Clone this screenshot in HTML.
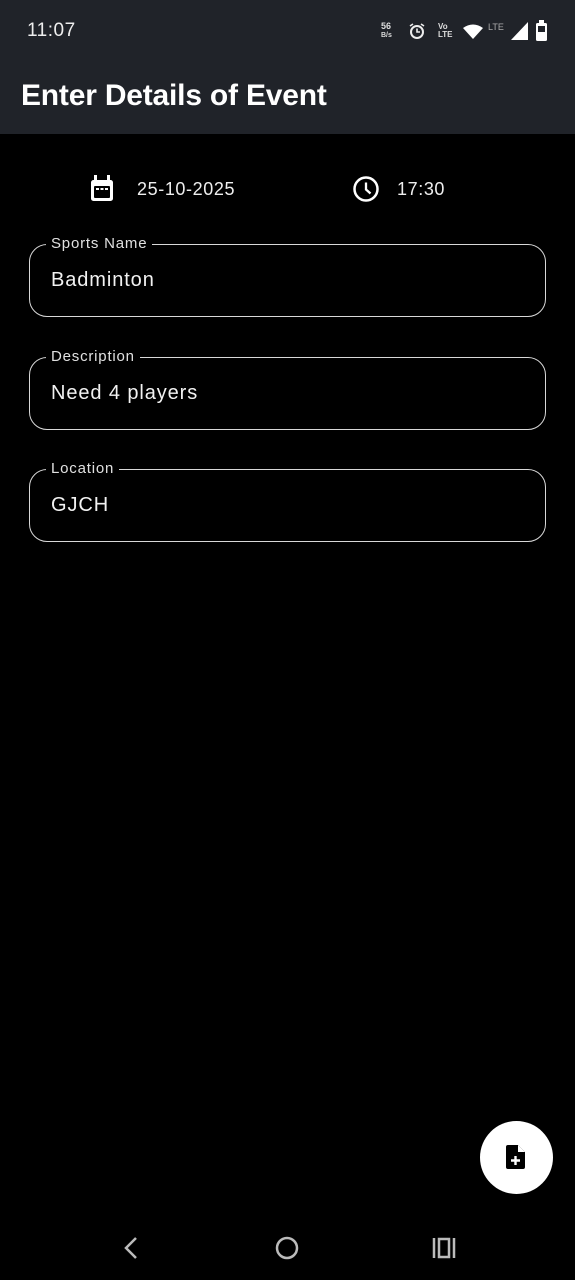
<!DOCTYPE html>
<html><head><style>
body{margin:0;width:575px;height:1280px;background:#000;font-family:"Liberation Sans",sans-serif;color:#fff;position:relative;overflow:hidden}
.hdr{position:absolute;left:0;top:0;width:575px;height:134px;background:#202329}
.abs{position:absolute}
.field{position:absolute;left:29px;width:517px;height:73px;border:1.3px solid #d8d8d8;border-radius:18px;box-sizing:border-box}
.lbl{position:absolute;left:16px;top:-10px;background:#000;padding:0 5px;font-size:15px;color:#e0e0e0;line-height:18px;letter-spacing:0.8px}
.val{position:absolute;left:21px;top:24px;font-size:20px;color:#f2f2f2;letter-spacing:0.9px}
</style></head><body>
<div class="hdr"></div>
<div class="abs" style="left:27px;top:20px;font-size:19px;color:#eee;letter-spacing:0.5px">11:07</div>
<div class="abs" style="left:381px;top:22px;font-size:9px;font-weight:bold;line-height:8px;color:#ddd">56<br><span style="font-size:7px">B/s</span></div>
<svg class="abs" style="left:408px;top:22px" width="18" height="18" viewBox="0 0 18 18"><circle cx="9" cy="10" r="6" fill="none" stroke="#eee" stroke-width="2"/><path d="M9 6.5V10h3M2 4l3-2M16 4l-3-2" stroke="#eee" stroke-width="1.6" fill="none"/></svg>
<div class="abs" style="left:438px;top:23px;font-size:8px;font-weight:bold;line-height:8px;color:#ddd">Vo<br>LTE</div>
<svg class="abs" style="left:463px;top:24px" width="20" height="16" viewBox="0 0 20 16"><path d="M0 4Q10-3 20 4L10 15Z" fill="#fff"/></svg>
<div class="abs" style="left:488px;top:22px;font-size:9px;color:#aaa">LTE</div>
<svg class="abs" style="left:511px;top:22px" width="17" height="18"><path d="M17 0V18H0Z" fill="#fff"/></svg>
<svg class="abs" style="left:535px;top:20px" width="13" height="22"><rect x="4" y="0" width="5" height="3" fill="#fff"/><rect x="1" y="3" width="11" height="18" rx="1.5" fill="#fff"/><rect x="3" y="6" width="7" height="6" fill="#202329"/></svg>
<div class="abs" style="left:21px;top:79px;font-size:30px;font-weight:bold;letter-spacing:-0.2px">Enter Details of Event</div>
<svg class="abs" style="left:89px;top:175px" width="26" height="28" viewBox="0 0 26 28"><rect x="2" y="5" width="22" height="21" rx="2.5" fill="#fff"/><rect x="5" y="0" width="3" height="6" fill="#fff"/><rect x="18" y="0" width="3" height="6" fill="#fff"/><rect x="5" y="11" width="16" height="12" rx="1" fill="#000"/><rect x="7" y="13" width="3" height="2" fill="#fff"/><rect x="11.5" y="13" width="3" height="2" fill="#fff"/><rect x="16" y="13" width="3" height="2" fill="#fff"/></svg>
<div class="abs" style="left:137px;top:179px;font-size:18px;color:#eee;letter-spacing:0.6px">25-10-2025</div>
<svg class="abs" style="left:352px;top:175px" width="28" height="28" viewBox="0 0 28 28"><circle cx="14" cy="14" r="11.5" fill="none" stroke="#fff" stroke-width="2.5"/><path d="M14 7.5V14.5l4.5 4" fill="none" stroke="#fff" stroke-width="2.3"/></svg>
<div class="abs" style="left:397px;top:179px;font-size:18px;color:#eee;letter-spacing:0.6px">17:30</div>
<div class="field" style="top:244px"><div class="lbl">Sports Name</div><div class="val">Badminton</div></div>
<div class="field" style="top:357px"><div class="lbl">Description</div><div class="val">Need 4 players</div></div>
<div class="field" style="top:469px"><div class="lbl">Location</div><div class="val">GJCH</div></div>
<div class="abs" style="left:480px;top:1121px;width:73px;height:73px;border-radius:50%;background:#fff"></div>
<svg class="abs" style="left:505px;top:1144px" width="22" height="26" viewBox="0 0 22 26"><path d="M3 1H13L20 8V23Q20 25 18 25H3Q1 25 1 23V3Q1 1 3 1Z" fill="#000"/><path d="M13 1V8H20" fill="#fff"/><path d="M10.5 12V21M6 16.5H15" stroke="#fff" stroke-width="2.4"/></svg>
<svg class="abs" style="left:122px;top:1236px" width="16" height="24"><path d="M14 2L4 12L14 22" fill="none" stroke="#bbb" stroke-width="2.5"/></svg>
<svg class="abs" style="left:275px;top:1236px" width="24" height="24"><circle cx="12" cy="12" r="10" fill="none" stroke="#bbb" stroke-width="2.5"/></svg>
<svg class="abs" style="left:432px;top:1237px" width="24" height="22"><path d="M2 1V21M22 1V21" stroke="#bbb" stroke-width="2.5"/><rect x="7" y="2" width="10" height="18" fill="none" stroke="#bbb" stroke-width="2.5"/></svg>
</body></html>
